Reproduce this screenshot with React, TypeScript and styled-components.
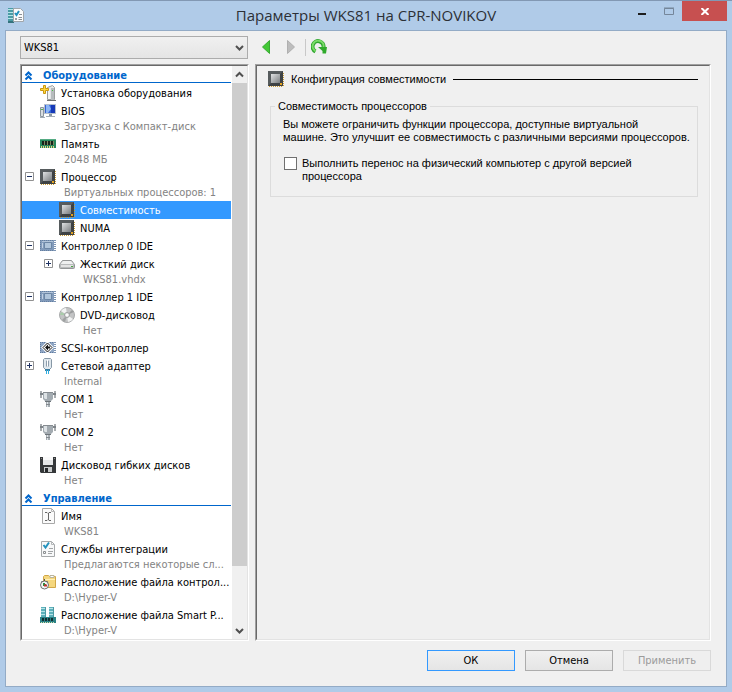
import React, { useState } from "react";
import styled, { createGlobalStyle } from "styled-components";

const GlobalStyle = createGlobalStyle`
  *, *::before, *::after { box-sizing: border-box; }
  body {
    margin: 0;
    background: #b0cbe8;
    color: #000;
    font: 11px/13px Tahoma, "DejaVu Sans Condensed", "Noto Sans", sans-serif;
  }
  button, select, input { font: inherit; color: inherit; }
`;

/* ---------- window frame ---------- */

const Window = styled.div`
  display: flex;
  flex-direction: column;
  min-height: 100vh;
  padding: 0 5px 5px;
  background: #b0cbe8;
  border-top: 1px solid #8298b3;
`;

const TitleBar = styled.header`
  display: grid;
  grid-template-columns: 99px 1fr 99px;
  height: 29px;
`;

const TitleIcon = styled.span`
  display: flex;
  padding: 6px 0 0 3px;
`;

const Title = styled.h1`
  margin: 0;
  text-align: center;
  white-space: nowrap;
  color: #2c3036;
  font: 400 15px/29px "Segoe UI", "Open Sans", "Noto Sans", sans-serif;
`;

const Caption = styled.div`
  display: flex;
  justify-content: flex-end;
  align-items: flex-start;
`;

const CaptionButton = styled.button<{ $close?: boolean }>`
  display: flex;
  align-items: center;
  justify-content: center;
  width: ${(p) => (p.$close ? 45 : 27)}px;
  height: 20px;
  padding: 0;
  border: 0;
  background: ${(p) => (p.$close ? "#c75050" : "transparent")};
`;

const Client = styled.main`
  flex: 1;
  display: flex;
  flex-direction: column;
  padding: 5px 15px 15px 14px;
  background: #f0f0f0;
  border: 1px solid #93abc6;
`;

/* ---------- toolbar ---------- */

const Toolbar = styled.div`
  display: flex;
  align-items: center;
  height: 23px;
  margin-bottom: 5px;
`;

const MachineField = styled.label`
  display: grid;
  width: 228px;
  height: 23px;
  margin-right: 9px;

  & > * { grid-area: 1 / 1; }
  & > svg { justify-self: end; align-self: center; margin-right: 4px; pointer-events: none; }
`;

const MachineSelect = styled.select`
  appearance: none;
  width: 100%;
  padding: 0 20px 0 3px;
  border: 1px solid #acacac;
  border-radius: 0;
  background: linear-gradient(#f0f0f0, #e5e5e5);
`;

const ToolButton = styled.button`
  display: flex;
  width: 18px;
  height: 18px;
  padding: 0 1px;
  margin-right: 6px;
  border: 0;
  background: none;
`;

const ToolDivider = styled.span`
  width: 1px;
  height: 17px;
  margin-right: 4px;
  background: #c8c8c8;
`;

/* ---------- sunken panes ---------- */

const Panes = styled.div`
  flex: 1;
  display: grid;
  grid-template-columns: 229px 1fr;
  gap: 6px;
`;

const Sunken = styled.section<{ $white?: boolean }>`
  display: flex;
  min-width: 0;
  border: 1px solid;
  border-color: #a0a0a0 #fff #fff #a0a0a0;
  background: ${(p) => (p.$white ? "#fff" : "#f0f0f0")};
`;

const SunkenInner = styled.div`
  flex: 1;
  display: flex;
  min-width: 0;
  border: 1px solid;
  border-color: #696969 #e3e3e3 #e3e3e3 #696969;
`;

/* ---------- tree ---------- */

const Tree = styled.nav`
  flex: 1;
  min-width: 0;
  margin-right: 1px;
`;

const SectionButton = styled.button`
  display: flex;
  align-items: center;
  gap: 10px;
  width: 100%;
  height: 17px;
  margin-bottom: 1px;
  padding: 2px 3px 0 2px;
  border: 0;
  border-bottom: 1px solid #0066cc;
  background: none;
  color: #0066cc;
  font-weight: 700;
`;

const Row = styled.div<{ $level: number; $selected: boolean }>`
  display: grid;
  grid-template-columns: 18px 1fr;
  padding-left: ${(p) => p.$level * 19}px;
  background: ${(p) => (p.$selected ? "#3399ff" : "transparent")};
  color: ${(p) => (p.$selected ? "#fff" : "#000")};
`;

const Expander = styled.button`
  display: flex;
  width: 9px;
  height: 9px;
  margin: 4px 0 0 3px;
  padding: 0;
  border: 0;
  background: none;
`;

const ItemButton = styled.button`
  grid-column: 2;
  display: grid;
  grid-template-columns: 16px 1fr;
  column-gap: 5px;
  min-width: 0;
  padding: 0;
  border: 0;
  background: none;
  text-align: left;

  & > svg { align-self: center; }
`;

const ItemName = styled.span`
  white-space: nowrap;
  padding-top: 2px;
  line-height: 16px;
`;

const ItemDetail = styled.span`
  grid-column: 2;
  padding: 0 0 2px 3px;
  white-space: nowrap;
  color: #838383;
`;

const ScrollTrack = styled.div`
  display: flex;
  flex-direction: column;
  width: 15px;
  background: #f0f0f0;
`;

const ScrollButton = styled.button`
  display: flex;
  align-items: center;
  justify-content: center;
  height: 17px;
  padding: 0;
  border: 0;
  background: none;
`;

const ScrollSpace = styled.div`
  flex: 1;
  display: flex;
  padding-bottom: 56px;
`;

const ScrollThumb = styled.div`
  flex: 1;
  background: #cdcdcd;
`;

/* ---------- details ---------- */

const Details = styled.div`
  flex: 1;
  min-width: 0;
  padding: 5px 11px;
  font-family: Tahoma, "Liberation Sans", sans-serif;
`;

const DetailsTitle = styled.h2`
  display: flex;
  align-items: center;
  gap: 7px;
  margin: 0 0 13px;
  font: inherit;
`;

const TitleRule = styled.span`
  flex: 1;
  height: 1px;
  background: #000;
`;

const Group = styled.fieldset`
  min-width: 0;
  margin: 0 0 0 2px;
  padding: 5px 2px 13px 12px;
  border: 1px solid #dcdcdc;
`;

const GroupLegend = styled.legend`
  margin-left: -8px;
  padding: 0 3px;
`;

const Description = styled.p`
  margin: 0 0 13px;
`;

const CheckLabel = styled.label`
  display: grid;
  grid-template-columns: 13px 1fr;
  gap: 5px;
  padding-left: 1px;
`;

const CheckBox = styled.input`
  appearance: none;
  width: 13px;
  height: 13px;
  margin: 0;
  border: 1px solid #707070;
  background: #fff;

  &:checked { background: #3399ff; box-shadow: inset 0 0 0 2px #fff; }
`;

/* ---------- footer ---------- */

const Footer = styled.footer`
  display: flex;
  justify-content: flex-end;
  gap: 10px;
  padding-top: 9px;
`;

const DialogButton = styled.button<{ $primary?: boolean }>`
  width: 88px;
  height: 21px;
  padding: 0;
  border: 1px solid ${(p) => (p.$primary ? "#3399ff" : "#acacac")};
  background: linear-gradient(#f0f0f0, #e5e5e5);

  &:disabled { border-color: #d9d9d9; background: #efefef; color: #9b9b9b; }
`;

/* ---------- drawings ---------- */

const Svg = ({ size = 16, children }: { size?: number; children: React.ReactNode }) => (
  <svg width={size} height={size} viewBox={`0 0 ${size} ${size}`} fill="none" aria-hidden="true">
    {children}
  </svg>
);

const CpuIcon = () => (
  <Svg>
    <defs>
      <linearGradient id="cpu" x1="0" y1="0" x2="1" y2="1">
        <stop offset="0" stopColor="#e0e2e3" /><stop offset="1" stopColor="#787c7f" />
      </linearGradient>
    </defs>
    <path d="M15.5 2v13M1 15.5h14" stroke="#c99a35" strokeDasharray="1 1" />
    <path d="M0 0h15v15H0z" fill="#3e4244" />
    <path d="M0 0h15l-3 3H3v9l-3 3z" fill="#565b5d" />
    <path d="M3 3h9v9H3z" fill="url(#cpu)" />
    <path d="M12 12h2v2h-2z" fill="#e2a21f" />
  </Svg>
);

const AddIcon = () => (
  <Svg>
    <path d="M7 15.5h9" stroke="#6e7172" />
    <path d="M7.500 2.500l5-2 2 2v12h-7z" fill="#e3e6e7" stroke="#9a9d9e" />
    <path d="M11 3h3v12h-3z" fill="#b7bcbe" />
    <path d="M9 4v10" stroke="#fff" />
    <path d="M12 5h1v1h-1z" fill="#44c03d" />
    <path d="M3.500.500h2v3h3v2h-3v3h-2v-3h-3v-2h3z" fill="#ffd83c" stroke="#c99712" />
  </Svg>
);

const BiosIcon = () => (
  <Svg>
    <path d="M.5 4.500h3v9h-3z" fill="#d9dee1" stroke="#8d969e" />
    <path d="M1 6.500h2" stroke="#50b848" />
    <path d="M4.500 1.500h11v9h-11z" fill="#1639b8" stroke="#b4bfcc" />
    <path d="M5 2h6v8H5z" fill="#3463d6" /><path d="M6 2h3l2 4-3 4H6z" fill="#8db6f4" />
    <path d="M9 11h3v2H9z" fill="#8b98a5" />
    <path d="M6 13.500h9M0 14.500h5" stroke="#a3adb6" />
  </Svg>
);

const MemoryIcon = () => (
  <Svg>
    <path d="M0 3h16v9H0z" fill="#26865c" />
    <path d="M0 3h16v1H0z" fill="#55ab83" />
    <path d="M2 5h12v4H2z" fill="#7d8560" />
    <path d="M3 5v4M6 5v4M9 5v4M12 5v4" stroke="#17231b" strokeWidth="2" />
    <path d="M1 11h14" stroke="#e2d080" strokeWidth="2" strokeDasharray="1 1" />
  </Svg>
);

const ControllerIcon = () => (
  <Svg>
    <path d="M0 2h14v11H0z" fill="#829bbb" />
    <path d="M.5 2v11M0 2.500h14M0 12.500h14" stroke="#647e9f" strokeDasharray="1 1" />
    <path d="M2 3.500h11" stroke="#b2c4d9" />
    <path d="M4.500 4.500h7v6h-7z" fill="#b0c5db" stroke="#6c86a5" />
    <path d="M2.500 5v5" stroke="#c1d0e2" />
    <path d="M15 2v11" stroke="#7d94b2" strokeWidth="2" strokeDasharray="1 1" />
  </Svg>
);

const DiskIcon = () => (
  <Svg>
    <path d="M3.500 4.500h9l3 4v3q0 1-1 1h-13q-1 0-1-1v-3z" fill="#b9bbbc" stroke="#949697" />
    <path d="M4 5h8l2.500 3h-13z" fill="#eff0f0" />
    <path d="M2 10h12" stroke="#e3e3e3" strokeWidth="2" />
    <path d="M12 10h2v1h-2z" fill="#4ba744" />
  </Svg>
);

const DvdIcon = () => (
  <Svg>
    <circle cx="8" cy="8" r="7.500" fill="#c3c4c5" stroke="#a9abac" />
    <path d="M8 8L2 4q2-3 5-3z" fill="#f2f3f3" /><path d="M8 8l6 4q-2 3-5 3z" fill="#f2f3f3" />
    <path d="M8 8L1 8l1-3z" fill="#a9ccaa" /><path d="M8 8l7-3-2-2z" fill="#9b9d9e" />
    <path d="M8 8l-5 5 3 2z" fill="#9fa1a2" />
    <circle cx="8" cy="8" r="2.500" fill="#eee" stroke="#9d9fa0" />
    <circle cx="8" cy="8" r="1" fill="#fff" />
  </Svg>
);

const ScsiIcon = () => (
  <Svg>
    <path d="M0 2h14v11H0z" fill="#8fa6c4" />
    <path d="M.5 2v11M0 2.500h14M0 12.500h14" stroke="#607a9e" strokeDasharray="1 1" />
    <path d="M15 2v11" stroke="#7d94b2" strokeWidth="2" strokeDasharray="1 1" />
    <path d="M7.500 2.500l5 5-5 5-5-5z" fill="#fff" stroke="#fff" strokeWidth="2" />
    <path d="M7.500 3l4.500 4.500-4.500 4.500L3 7.500z" stroke="#111" />
    <path d="M8 4.500l-3 3 3 3z" fill="#111" /><path d="M7 7.500h3" stroke="#111" strokeWidth="2" />
  </Svg>
);

const NetworkIcon = () => (
  <Svg>
    <path d="M4.500.500h6l1 1v8l-2 2h-4l-2-2v-8z" fill="#dfe7ed" stroke="#8798a6" />
    <path d="M6 2h3v6H6z" fill="#fff" /><path d="M6.500 2.500v6M8.500 2.500v6" stroke="#8d9dac" />
    <path d="M5 11h5v2H5z" fill="#3c7ca0" />
    <path d="M6.500 12v4M8.500 12v4" stroke="#30aee0" />
  </Svg>
);

const ComIcon = () => (
  <Svg>
    <path d="M1 0v7M15 0v7" stroke="#a9adb0" strokeWidth="2" />
    <path d="M0 2h16v2H0z" fill="#7d8388" />
    <path d="M3 1h10v7l-2 2H5L3 8z" fill="#a3abb1" />
    <path d="M4 2h3v6H5L4 7z" fill="#dde2e5" />
    <path d="M3 1.500h10" stroke="#858b90" />
    <path d="M5 10.500h6" stroke="#6d7479" />
    <path d="M6 11h4v5H6z" fill="#a4acb2" /><path d="M7 11h1v5H7z" fill="#e0e4e7" />
    <path d="M6 13.500h4" stroke="#83898e" />
  </Svg>
);

const FloppyIcon = () => (
  <Svg>
    <path d="M0 0h16v16H1l-1-1z" fill="#35383a" />
    <path d="M3 0h10v8H3z" fill="#e4e6e7" /><path d="M3 0h10v3H3z" fill="#fafafa" />
    <path d="M4 10h8v5H4z" fill="#c7cacb" /><path d="M5 11h3v4H5z" fill="#26292b" />
    <path d="M14 1h1v1h-1zM1 1h1v1H1z" fill="#888" />
  </Svg>
);

const NameIcon = () => (
  <Svg>
    <path d="M2.500.500h9l3 3v12h-12z" fill="#fbfbfb" stroke="#a8a8a8" />
    <path d="M11.500.500v3h3" stroke="#b8b8b8" />
    <path d="M5 4.500h2M9 4.500h2M7.500 5h1v7h-1M5 12.500h2M9 12.500h2" stroke="#666" />
  </Svg>
);

const ServicesIcon = () => (
  <Svg>
    <path d="M1.500.500h10l3 3v12h-13z" fill="#f8f9fa" stroke="#a6a9ab" />
    <path d="M11.500.500v3h3" stroke="#b5b8ba" />
    <path d="M3.500 4l2 2.500L9 1.500" stroke="#2492bd" strokeWidth="2" />
    <path d="M3.500 10.500h2v2h-2z" stroke="#8b8e90" />
    <path d="M9 7.500h4M8 10.500h5M8 12.500h4" stroke="#a2a5a7" />
  </Svg>
);

const FolderIcon = () => (
  <Svg>
    <path d="M3.500 2.500l1-1h4l1 1h6v11h-12z" fill="#f5d77e" stroke="#d1a748" />
    <path d="M10 1.500h4v2h-4z" fill="#fff" stroke="#b9b49d" />
    <path d="M4 5h11v1H4z" fill="#fff0b5" />
    <circle cx="4.500" cy="11" r="4" fill="#f4f5f5" stroke="#6f7273" />
    <path d="M4.500 5v2M1.500 7l1 1M7.500 7l-1 1" stroke="#555" />
    <path d="M4 9v2h2" stroke="#298f3f" strokeWidth="2" /><path d="M4 11.500h3" stroke="#c52f2f" strokeWidth="2" />
  </Svg>
);

const PagingIcon = () => (
  <Svg>
    <path d="M1 0h5v10H1zM9 0h5v10H9z" fill="#5db1bb" />
    <path d="M1 1.500h5M9 1.500h5M1 4.500h5M9 4.500h5M1 7.500h5M9 7.500h5" stroke="#b6e3e7" />
    <path d="M5.500 0v10M13.500 0v10" stroke="#4d98a2" />
    <path d="M0 10h16v6H0z" fill="#2a8185" />
    <path d="M2 12.500h12" stroke="#122f31" strokeWidth="3" strokeDasharray="2 1" />
    <path d="M1 15.500h14" stroke="#d2dda8" strokeDasharray="1 1" />
  </Svg>
);

const WindowIcon = () => (
  <Svg>
    <path d="M0 1h7v13H0z" fill="#4b9ba5" />
    <path d="M0 2.500h6M0 5.500h6M0 8.500h6M0 11.500h6" stroke="#b5e5e8" />
    <path d="M0 15h6" stroke="#34727c" strokeWidth="2" />
    <path d="M5.500 1.500h7l3 3v10h-10z" fill="#fafbfc" stroke="#a1a6ab" />
    <path d="M7 6l1.500 2L11 4" stroke="#2492bd" strokeWidth="2" />
    <path d="M7 11h2v2H7z" fill="#9a9ea2" />
    <path d="M11 7.500h3M10.500 10.500H14M10.500 12.500H14" stroke="#8b9095" />
  </Svg>
);

const ArrowIcon = ({ forward }: { forward?: boolean }) => (
  <Svg>
    {forward ? (
      <path d="M5.500 1.500l7 6.500-7 6.500z" fill="#bdbdbd" stroke="#b0b0b0" />
    ) : (
      <path d="M11.500 1.500L4.500 8l7 6.500z" fill="#43c836" stroke="#38aa32" />
    )}
  </Svg>
);

const RefreshIcon = () => (
  <Svg>
    <path d="M4.500 12.500A5.500 5.500 0 1 1 12.500 8.500" stroke="#2fa52f" strokeWidth="4" />
    <path d="M4.500 12A5.500 5.500 0 1 1 12.500 8.500" stroke="#7bdd68" strokeWidth="2" />
    <path d="M7 8h9l-1 6.500H11.500V12z" fill="#2faa2b" />
  </Svg>
);

const SmallChevron = ({ up }: { up?: boolean }) => (
  <Svg size={9}>
    <path d={up ? "M1 6.500L4.500 3 8 6.500" : "M1 3l3.500 3.500L8 3"} stroke="#505050" strokeWidth="2" />
  </Svg>
);

const DoubleChevron = () => (
  <Svg size={9}>
    <path d="M1.500 4.500l3-3 3 3M1.500 8.500l3-3 3 3" stroke="#0066cc" strokeWidth="2" />
  </Svg>
);

const ExpandMark = ({ open }: { open: boolean }) => (
  <Svg size={9}>
    <path d="M.5.5h8v8h-8z" fill="#fff" stroke="#919191" />
    <path d={open ? "M2 4.500h5" : "M2 4.500h5M4.500 2v5"} stroke="#1f3263" />
  </Svg>
);

/* ---------- content ---------- */

type Item = {
  name: string;
  icon: React.ComponentType;
  detail?: string;
  level?: number;
  open?: boolean;
};

const hardware: Item[] = [
  { name: "Установка оборудования", icon: AddIcon },
  { name: "BIOS", icon: BiosIcon, detail: "Загрузка с Компакт-диск" },
  { name: "Память", icon: MemoryIcon, detail: "2048 МБ" },
  { name: "Процессор", icon: CpuIcon, detail: "Виртуальных процессоров: 1", open: true },
  { name: "Совместимость", icon: CpuIcon, level: 1 },
  { name: "NUMA", icon: CpuIcon, level: 1 },
  { name: "Контроллер 0 IDE", icon: ControllerIcon, open: true },
  { name: "Жесткий диск", icon: DiskIcon, detail: "WKS81.vhdx", level: 1, open: false },
  { name: "Контроллер 1 IDE", icon: ControllerIcon, open: true },
  { name: "DVD-дисковод", icon: DvdIcon, detail: "Нет", level: 1 },
  { name: "SCSI-контроллер", icon: ScsiIcon },
  { name: "Сетевой адаптер", icon: NetworkIcon, detail: "Internal", open: false },
  { name: "COM 1", icon: ComIcon, detail: "Нет" },
  { name: "COM 2", icon: ComIcon, detail: "Нет" },
  { name: "Дисковод гибких дисков", icon: FloppyIcon, detail: "Нет" },
];

const management: Item[] = [
  { name: "Имя", icon: NameIcon, detail: "WKS81" },
  { name: "Службы интеграции", icon: ServicesIcon, detail: "Предлагаются некоторые сл..." },
  { name: "Расположение файла контрол...", icon: FolderIcon, detail: "D:\\Hyper-V" },
  { name: "Расположение файла Smart P...", icon: PagingIcon, detail: "D:\\Hyper-V" },
];

type SectionProps = {
  title: string;
  items: Item[];
  selected: string;
  onSelect: (name: string) => void;
};

const TreeSection = ({ title, items, selected, onSelect }: SectionProps) => (
  <>
    <SectionButton type="button" aria-expanded="true">
      <DoubleChevron />
      {title}
    </SectionButton>
    {items.map(({ name, icon: Icon, detail, level = 0, open }) => (
      <Row key={name} $level={level} $selected={selected === name}>
        {open !== undefined && (
          <Expander type="button" aria-label={name} aria-expanded={open}>
            <ExpandMark open={open} />
          </Expander>
        )}
        <ItemButton type="button" onClick={() => onSelect(name)}>
          <Icon />
          <ItemName>{name}</ItemName>
          {detail && <ItemDetail>{detail}</ItemDetail>}
        </ItemButton>
      </Row>
    ))}
  </>
);

export default function App() {
  const [selected, setSelected] = useState("Совместимость");

  return (
    <>
      <GlobalStyle />
      <Window>
        <TitleBar>
          <TitleIcon><WindowIcon /></TitleIcon>
          <Title>Параметры WKS81 на CPR-NOVIKOV</Title>
          <Caption>
            <CaptionButton type="button" aria-label="Свернуть">
              <svg width="8" height="8" aria-hidden="true"><path d="M0 7h8" stroke="#1e1e1e" strokeWidth="2" /></svg>
            </CaptionButton>
            <CaptionButton type="button" aria-label="Развернуть">
              <svg width="10" height="8" aria-hidden="true"><path d="M.5 1.500h9v6h-9zM0 1h10" fill="none" stroke="#75869a" /></svg>
            </CaptionButton>
            <CaptionButton type="button" aria-label="Закрыть" $close>
              <svg width="8" height="7" aria-hidden="true"><path d="M.5 0l7 7M7.500 0l-7 7" stroke="#fff" strokeWidth="2" /></svg>
            </CaptionButton>
          </Caption>
        </TitleBar>

        <Client>
          <Toolbar>
            <MachineField>
              <MachineSelect aria-label="Виртуальная машина" defaultValue="WKS81">
                <option>WKS81</option>
              </MachineSelect>
              <SmallChevron />
            </MachineField>
            <ToolButton type="button" aria-label="Назад"><ArrowIcon /></ToolButton>
            <ToolButton type="button" aria-label="Вперед"><ArrowIcon forward /></ToolButton>
            <ToolDivider />
            <ToolButton type="button" aria-label="Обновить"><RefreshIcon /></ToolButton>
          </Toolbar>

          <Panes>
            <Sunken $white>
              <SunkenInner>
                <Tree>
                  <TreeSection title="Оборудование" items={hardware} selected={selected} onSelect={setSelected} />
                  <TreeSection title="Управление" items={management} selected={selected} onSelect={setSelected} />
                </Tree>
                <ScrollTrack>
                  <ScrollButton type="button" aria-label="Вверх"><SmallChevron up /></ScrollButton>
                  <ScrollSpace><ScrollThumb /></ScrollSpace>
                  <ScrollButton type="button" aria-label="Вниз"><SmallChevron /></ScrollButton>
                </ScrollTrack>
              </SunkenInner>
            </Sunken>

            <Sunken>
              <SunkenInner>
                <Details>
                  <DetailsTitle>
                    <CpuIcon />
                    Конфигурация совместимости
                    <TitleRule />
                  </DetailsTitle>
                  <Group>
                    <GroupLegend>Совместимость процессоров</GroupLegend>
                    <Description>
                      Вы можете ограничить функции процессора, доступные виртуальной
                      <br />
                      машине. Это улучшит ее совместимость с различными версиями процессоров.
                    </Description>
                    <CheckLabel>
                      <CheckBox type="checkbox" />
                      <span>
                        Выполнить перенос на физический компьютер с другой версией
                        <br />
                        процессора
                      </span>
                    </CheckLabel>
                  </Group>
                </Details>
              </SunkenInner>
            </Sunken>
          </Panes>

          <Footer>
            <DialogButton type="button" $primary>ОК</DialogButton>
            <DialogButton type="button">Отмена</DialogButton>
            <DialogButton type="button" disabled>Применить</DialogButton>
          </Footer>
        </Client>
      </Window>
    </>
  );
}
